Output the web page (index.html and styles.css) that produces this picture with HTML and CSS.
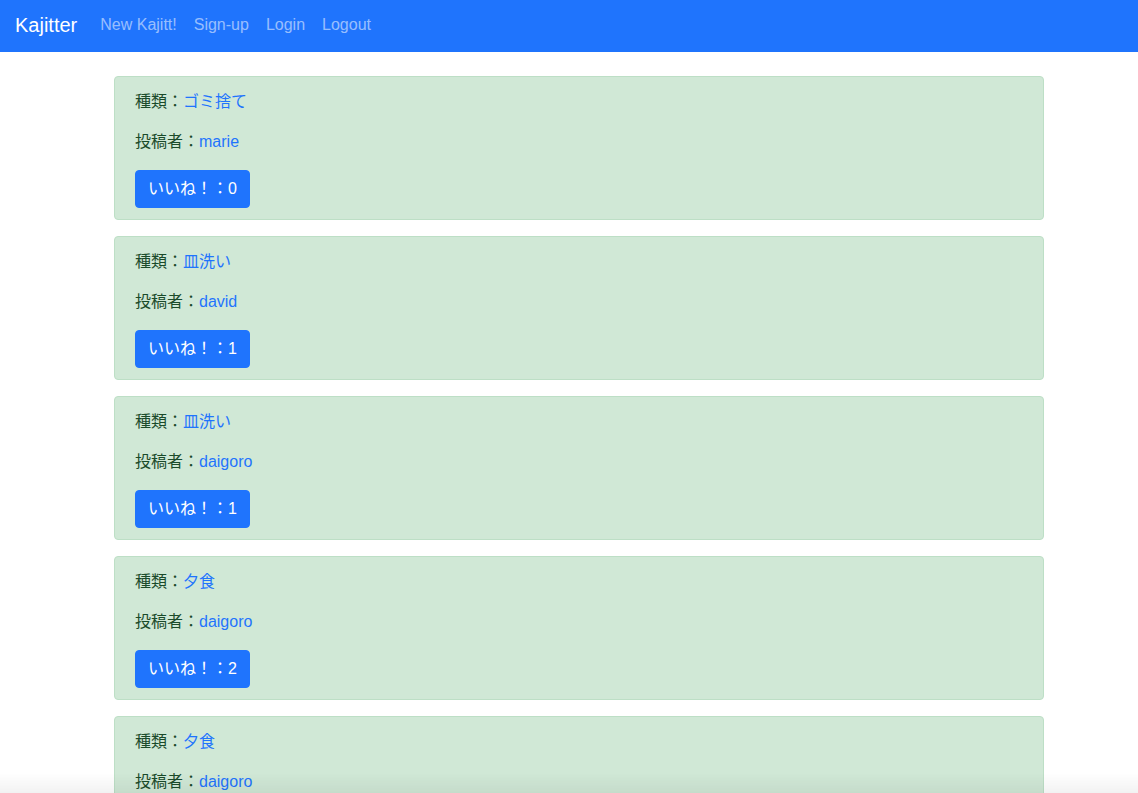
FILE: index.html
```html
<!DOCTYPE html>
<html lang="ja">
<head>
<meta charset="utf-8">
<title>Kajitter</title>
<link rel="stylesheet" href="styles.css">
</head>
<body>
<nav class="navbar">
  <a class="brand" href="#">Kajitter</a>
  <ul class="nav">
    <li><a class="nav-link" href="#">New Kajitt!</a></li>
    <li><a class="nav-link" href="#">Sign-up</a></li>
    <li><a class="nav-link" href="#">Login</a></li>
    <li><a class="nav-link" href="#">Logout</a></li>
  </ul>
</nav>
<main class="container">
  <div class="alert">
    <p>種類：<a href="#">ゴミ捨て</a></p>
    <p>投稿者：<a href="#">marie</a></p>
    <button class="btn">いいね！：0</button>
  </div>
  <div class="alert">
    <p>種類：<a href="#">皿洗い</a></p>
    <p>投稿者：<a href="#">david</a></p>
    <button class="btn">いいね！：1</button>
  </div>
  <div class="alert">
    <p>種類：<a href="#">皿洗い</a></p>
    <p>投稿者：<a href="#">daigoro</a></p>
    <button class="btn">いいね！：1</button>
  </div>
  <div class="alert">
    <p>種類：<a href="#">夕食</a></p>
    <p>投稿者：<a href="#">daigoro</a></p>
    <button class="btn">いいね！：2</button>
  </div>
  <div class="alert">
    <p>種類：<a href="#">夕食</a></p>
    <p>投稿者：<a href="#">daigoro</a></p>
    <button class="btn">いいね！：0</button>
  </div>
</main>
<div class="bottom-shade"></div>
</body>
</html>
```
FILE: styles.css
```css
* { box-sizing: border-box; }
html, body {
  margin: 0;
  padding: 0;
}
body {
  font-family: "Liberation Sans", "Noto Sans CJK JP", sans-serif;
  font-size: 16px;
  line-height: 24px;
  color: #212529;
  background: #fff;
  text-spacing-trim: space-all;
}
a { text-decoration: none; }

.navbar {
  display: flex;
  align-items: center;
  height: 52px;
  padding: 0 16px 0 15px;
  background: #1f74fd;
}
.brand {
  color: #fff;
  font-size: 20px;
  line-height: 30px;
  margin-right: 15px;
  margin-top: -3px;
}
.nav {
  display: flex;
  list-style: none;
  margin: 0;
  padding: 0;
}
.nav-link {
  display: block;
  padding: 0 8px;
  color: rgba(255, 255, 255, 0.55);
  margin-top: -3px;
}
.nav li + li .nav-link { margin-left: 1px; }

.container {
  max-width: 950px;
  margin: 0 auto;
  padding: 24px 0 0 20px;
}
.alert {
  background: #d0e8d6;
  border: 1px solid #bddfc6;
  border-radius: 4px;
  color: #1b4b2b;
  padding: 13px 20px 11px;
  margin-bottom: 16px;
}
.alert p {
  margin: 0 0 16px;
}
.alert a { color: #1f74fd; }
.btn {
  display: block;
  font-family: "Liberation Sans", "Noto Sans CJK JP", sans-serif;
  font-size: 16px;
  line-height: 24px;
  padding: 6px 12px;
  color: #fff;
  background: #1f74fd;
  border: 1px solid #1f74fd;
  border-radius: 4px;
  cursor: pointer;
  text-spacing-trim: space-all;
}
.bottom-shade {
  position: fixed;
  left: 0;
  right: 0;
  bottom: 0;
  height: 20px;
  background: linear-gradient(to bottom, rgba(0,0,0,0), rgba(0,0,0,0.05));
  pointer-events: none;
}
```
